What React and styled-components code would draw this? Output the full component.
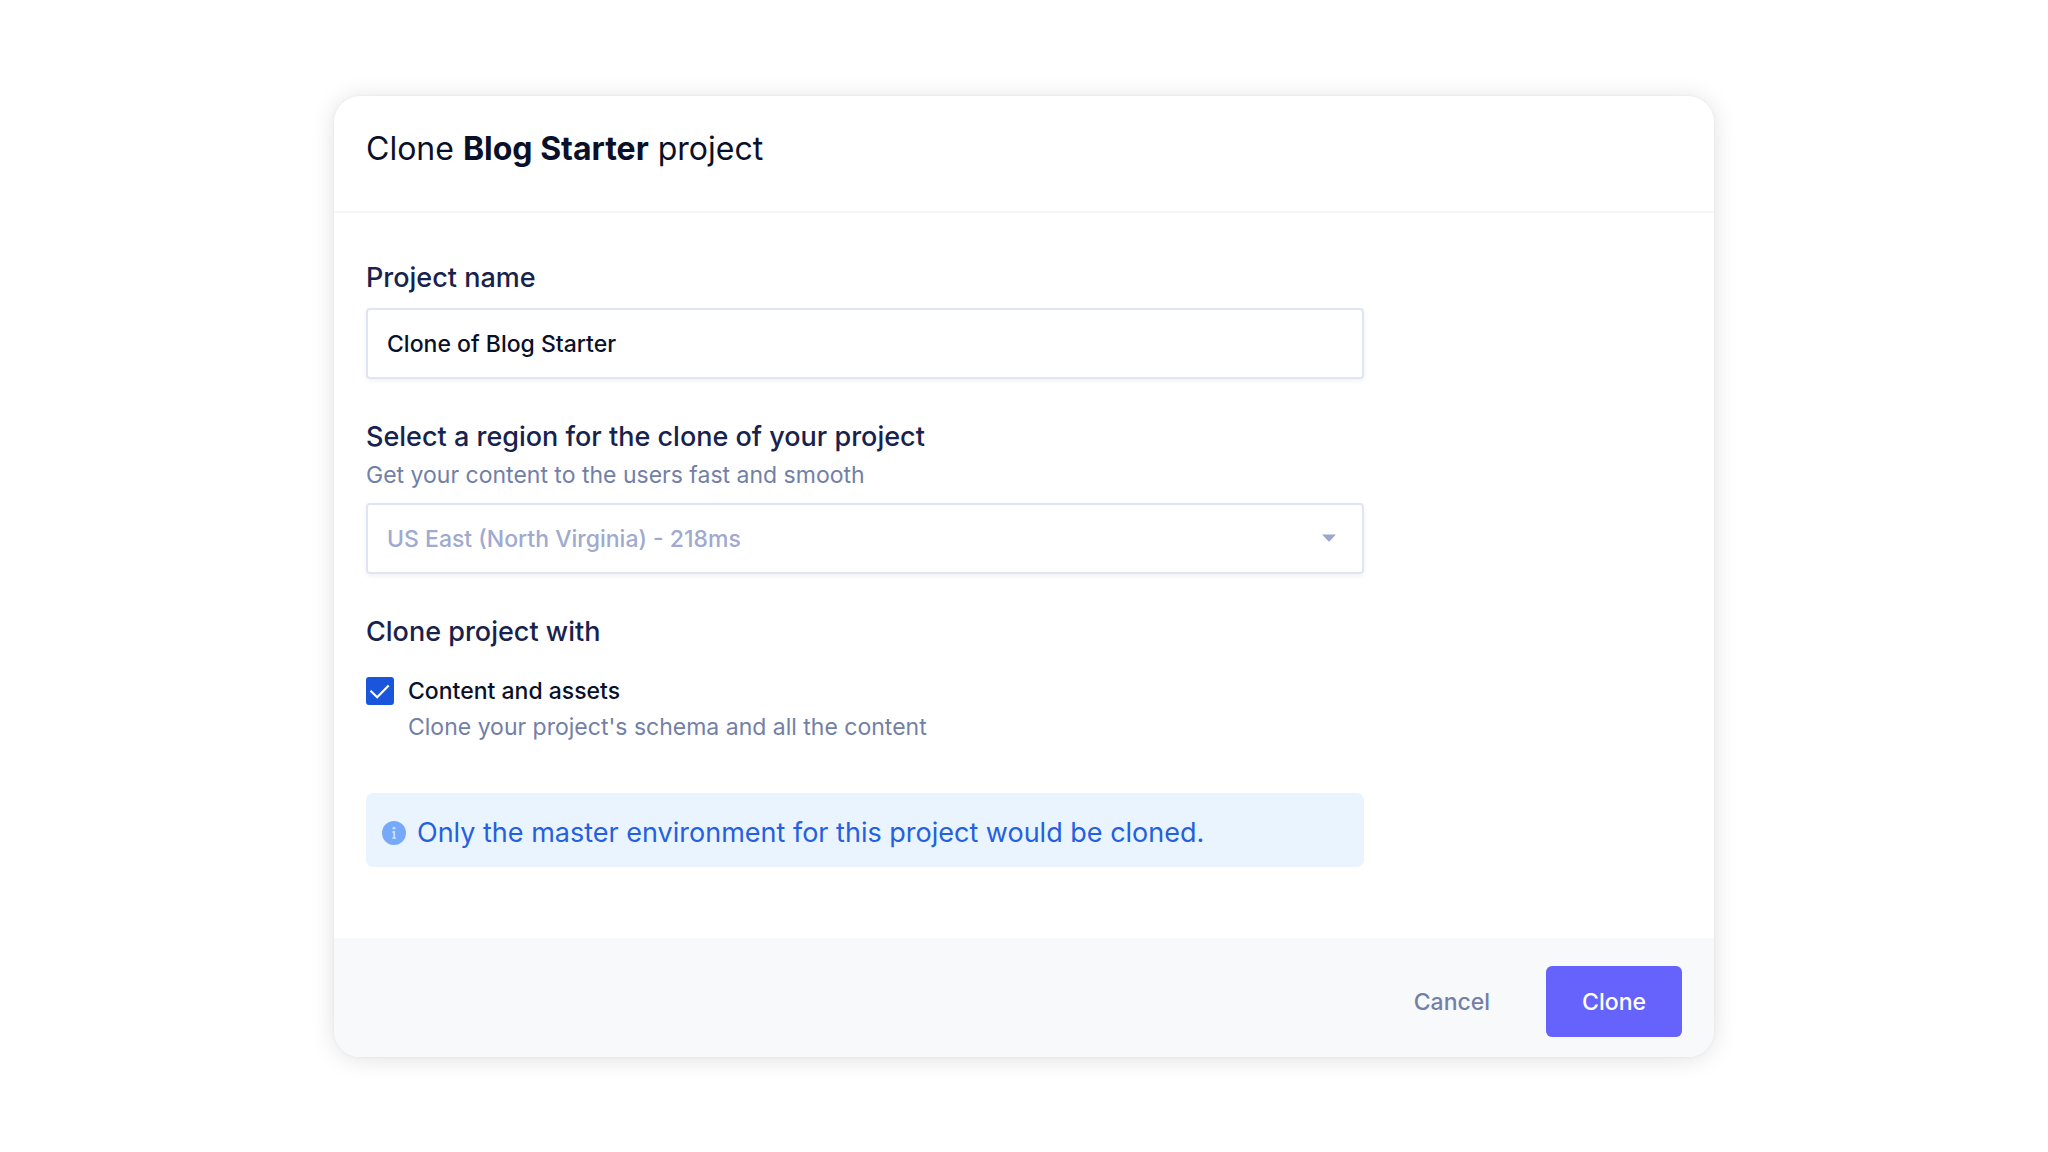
import React, { useState } from 'react';
import styled, { createGlobalStyle, ThemeProvider } from 'styled-components';

const theme = {
  fontFamily: "Inter, 'Liberation Sans', sans-serif",
  headingColor: '#0a1029',
  labelColor: '#17224d',
  mutedColor: '#7280a7',
  disabledColor: '#a0a9cf',
  borderColor: '#e1e5f3',
  checkColor: '#1a56db',
  primaryColor: '#6663fd',
};

const GlobalStyle = createGlobalStyle`
  *, *::before, *::after {
    box-sizing: border-box;
  }
  body {
    margin: 0;
    background: #fff;
    font-family: ${props => props.theme.fontFamily};
  }
`;

const Page = styled.main`
  display: flex;
  align-items: center;
  justify-content: center;
  min-height: 100vh;
  padding: 32px;
`;

const Dialog = styled.form`
  width: 100%;
  max-width: 1380px;
  border-radius: 26px;
  background: #fff;
  box-shadow: 0 0 3px rgba(0, 0, 0, 0.06), 0 2px 24px rgba(0, 0, 0, 0.12);
  overflow: hidden;
`;

const DialogHeader = styled.header`
  padding: 33px 32px 42px;
  border-bottom: 2px solid #f4f6fb;
`;

const Title = styled.h1`
  margin: 0;
  color: ${props => props.theme.headingColor};
  font-size: 32px;
  font-weight: 400;
  line-height: 40px;

  strong {
    font-weight: 700;
  }
`;

const DialogBody = styled.div`
  display: flex;
  flex-direction: column;
  gap: 38px;
  padding: 45px 32px 71px;

  > * {
    width: 100%;
    max-width: 998px;
  }
`;

const Field = styled.div`
  display: flex;
  flex-direction: column;
`;

const Label = styled.label`
  color: ${props => props.theme.labelColor};
  font-size: 27px;
  font-weight: 500;
  line-height: 40px;
`;

const Hint = styled.span`
  color: ${props => props.theme.mutedColor};
  font-size: 23px;
  line-height: 36px;
`;

const TextInput = styled.input`
  width: 100%;
  height: 71px;
  margin: 10px 0 0;
  padding: 2px 19px 0;
  border: 2px solid ${props => props.theme.borderColor};
  border-radius: 4px;
  background: #fff;
  box-shadow: 0 2px 5px rgba(0, 0, 0, 0.06);
  color: ${props => props.theme.headingColor};
  font-family: inherit;
  font-size: 23px;
  font-weight: 500;
`;

const SelectBox = styled.div`
  display: grid;
  align-items: center;

  > * {
    grid-area: 1 / 1;
  }

  svg {
    justify-self: end;
    margin: 10px 28px 0 0;
    pointer-events: none;
  }
`;

const Select = styled(TextInput).attrs({ as: 'select' })`
  appearance: none;
  color: ${props => props.theme.disabledColor};
  opacity: 1;
`;

const CheckGroup = styled.fieldset`
  min-width: 0;
  margin: 0;
  padding: 0;
  border: 0;

  legend {
    margin-bottom: 21px;
    padding: 0;
    color: ${props => props.theme.labelColor};
    font-size: 27px;
    font-weight: 500;
    line-height: 40px;
  }
`;

const CheckRow = styled.div`
  display: grid;
  grid-template-columns: 28px 1fr;
  column-gap: 14px;
  align-items: center;

  ${Hint} {
    grid-column: 2;
  }
`;

const CheckBox = styled.span`
  display: grid;

  > * {
    grid-area: 1 / 1;
  }

  svg {
    pointer-events: none;
  }
`;

const CheckInput = styled.input`
  appearance: none;
  width: 28px;
  height: 28px;
  margin: 0;
  border: 2px solid ${props => props.theme.checkColor};
  border-radius: 3px;

  &:checked {
    background: ${props => props.theme.checkColor};
  }
`;

const CheckLabel = styled.label`
  color: ${props => props.theme.headingColor};
  font-size: 23px;
  font-weight: 500;
  line-height: 36px;
`;

const Notice = styled.p`
  display: flex;
  align-items: center;
  gap: 11px;
  min-height: 74px;
  margin: 10px 0 0;
  padding: 6px 16px 0;
  border-radius: 7px;
  background: #eaf4ff;
  color: #2460e0;
  font-size: 27px;
  line-height: 40px;

  svg {
    flex: none;
  }
`;

const DialogFooter = styled.footer`
  display: flex;
  justify-content: flex-end;
  gap: 20px;
  padding: 28px 32px 20px;
  background: #f8f9fb;
`;

const Button = styled.button`
  height: 71px;
  padding: 2px 36px 0;
  border: 0;
  border-radius: 6px;
  background: ${props => (props.$primary ? props.theme.primaryColor : 'transparent')};
  color: ${props => (props.$primary ? '#fff' : props.theme.mutedColor)};
  font-family: inherit;
  font-size: 23px;
  font-weight: 500;
  cursor: pointer;
`;

const CaretIcon = () => (
  <svg width="14" height="8" viewBox="0 0 14 8" aria-hidden="true">
    <path d="M0 0.5h14L7.6 7.2a0.9 0.9 0 0 1-1.2 0z" fill="#9ba6cd" />
  </svg>
);

const CheckIcon = () => (
  <svg width="28" height="28" viewBox="0 0 28 28" aria-hidden="true">
    <path d="M4.5 13.8l6.7 6.4L22.7 8.5" fill="none" stroke="#fff" strokeWidth="2.2" />
  </svg>
);

const InfoIcon = () => (
  <svg width="24" height="24" viewBox="0 0 24 24" aria-hidden="true">
    <circle cx="12" cy="12" r="12" fill="#76a9fa" />
    <circle cx="12" cy="7.2" r="1.4" fill="#c8dffe" />
    <path d="M10.4 11h1.8v6.2M10.4 17.2h3.4" fill="none" stroke="#c8dffe" strokeWidth="1.8" />
  </svg>
);

const App = () => {
  const [name, setName] = useState('Clone of Blog Starter');
  const [withContent, setWithContent] = useState(true);

  return (
    <ThemeProvider theme={theme}>
      <GlobalStyle />
      <Page>
        <Dialog onSubmit={e => e.preventDefault()}>
          <DialogHeader>
            <Title>
              Clone <strong>Blog Starter</strong> project
            </Title>
          </DialogHeader>
          <DialogBody>
            <Field>
              <Label htmlFor="name">Project name</Label>
              <TextInput
                id="name"
                type="text"
                value={name}
                onChange={e => setName(e.target.value)}
              />
            </Field>
            <Field>
              <Label htmlFor="region">Select a region for the clone of your project</Label>
              <Hint id="region-hint">Get your content to the users fast and smooth</Hint>
              <SelectBox>
                <Select id="region" aria-describedby="region-hint" disabled>
                  <option>US East (North Virginia) - 218ms</option>
                </Select>
                <CaretIcon />
              </SelectBox>
            </Field>
            <CheckGroup>
              <legend>Clone project with</legend>
              <CheckRow>
                <CheckBox>
                  <CheckInput
                    id="content"
                    type="checkbox"
                    aria-describedby="content-hint"
                    checked={withContent}
                    onChange={e => setWithContent(e.target.checked)}
                  />
                  {withContent && <CheckIcon />}
                </CheckBox>
                <CheckLabel htmlFor="content">Content and assets</CheckLabel>
                <Hint id="content-hint">Clone your project's schema and all the content</Hint>
              </CheckRow>
            </CheckGroup>
            <Notice>
              <InfoIcon />
              Only the master environment for this project would be cloned.
            </Notice>
          </DialogBody>
          <DialogFooter>
            <Button type="button">Cancel</Button>
            <Button type="submit" $primary>
              Clone
            </Button>
          </DialogFooter>
        </Dialog>
      </Page>
    </ThemeProvider>
  );
};

export default App;
